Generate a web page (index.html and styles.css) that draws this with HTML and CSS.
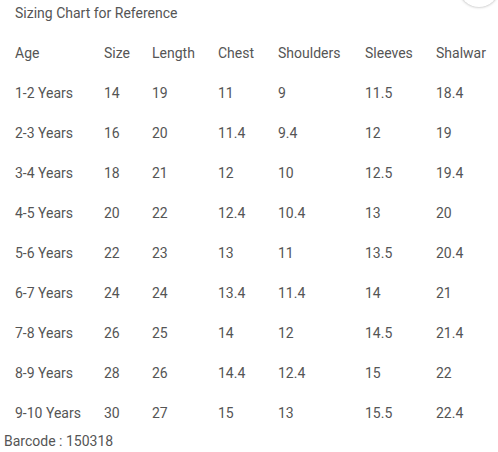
FILE: index.html
```html
<!DOCTYPE html>
<html>
<head>
<meta charset="utf-8">
<link rel="stylesheet" href="styles.css">
</head>
<body>
<div class="modal">
  <button class="close" aria-label="Close"></button>
  <h2 class="title">Sizing Chart for Reference</h2>
  <table class="chart">
    <colgroup>
      <col class="c-age"><col class="c-size"><col class="c-length"><col class="c-chest"><col class="c-shoulders"><col class="c-sleeves"><col class="c-shalwar">
    </colgroup>
    <thead>
      <tr><th>Age</th><th>Size</th><th>Length</th><th>Chest</th><th>Shoulders</th><th>Sleeves</th><th>Shalwar</th></tr>
    </thead>
    <tbody>
      <tr><td>1-2 Years</td><td>14</td><td>19</td><td>11</td><td>9</td><td>11.5</td><td>18.4</td></tr>
      <tr><td>2-3 Years</td><td>16</td><td>20</td><td>11.4</td><td>9.4</td><td>12</td><td>19</td></tr>
      <tr><td>3-4 Years</td><td>18</td><td>21</td><td>12</td><td>10</td><td>12.5</td><td>19.4</td></tr>
      <tr><td>4-5 Years</td><td>20</td><td>22</td><td>12.4</td><td>10.4</td><td>13</td><td>20</td></tr>
      <tr><td>5-6 Years</td><td>22</td><td>23</td><td>13</td><td>11</td><td>13.5</td><td>20.4</td></tr>
      <tr><td>6-7 Years</td><td>24</td><td>24</td><td>13.4</td><td>11.4</td><td>14</td><td>21</td></tr>
      <tr><td>7-8 Years</td><td>26</td><td>25</td><td>14</td><td>12</td><td>14.5</td><td>21.4</td></tr>
      <tr><td>8-9 Years</td><td>28</td><td>26</td><td>14.4</td><td>12.4</td><td>15</td><td>22</td></tr>
      <tr><td>9-10 Years</td><td>30</td><td>27</td><td>15</td><td>13</td><td>15.5</td><td>22.4</td></tr>
    </tbody>
  </table>
  <p class="barcode">Barcode : 150318</p>
</div>
</body>
</html>
```
FILE: styles.css
```css
html, body {
  margin: 0;
  padding: 0;
  background: #fff;
}
body {
  font-family: Roboto, "Liberation Sans", sans-serif;
  font-size: 14px;
  color: #555;
  overflow: hidden;
}
.modal {
  position: relative;
  width: 498px;
  height: 452px;
}
.close {
  position: absolute;
  top: -33px;
  left: 459px;
  width: 40px;
  height: 40px;
  border-radius: 50%;
  border: none;
  background: #fff;
  box-shadow: 0 0 3px rgba(0, 0, 0, 0.35);
  padding: 0;
}
.title {
  margin: 0;
  padding: 3px 0 0 15px;
  font-size: 14px;
  font-weight: 400;
  line-height: 20px;
  height: 30px;
  color: #555;
}
.chart {
  border-collapse: collapse;
  table-layout: fixed;
  margin-left: 15px;
  width: 483px;
}
.chart th, .chart td {
  padding: 0;
  height: 40px;
  line-height: 20px;
  text-align: left;
  font-weight: 400;
  white-space: nowrap;
}
.c-age { width: 89px; }
.c-size { width: 48px; }
.c-length { width: 66px; }
.c-chest { width: 60px; }
.c-shoulders { width: 87px; }
.c-sleeves { width: 71px; }
.c-shalwar { width: 62px; }
.barcode {
  margin: 0;
  padding-left: 4px;
  line-height: 16px;
}
```
